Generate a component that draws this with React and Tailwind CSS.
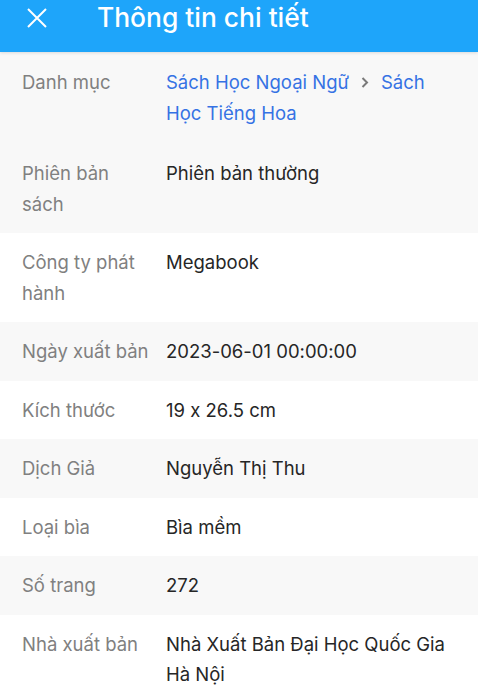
import React from "react";

const rows = [
  { label: "Phiên bản sách", value: "Phiên bản thường" },
  { label: "Công ty phát hành", value: "Megabook" },
  { label: "Ngày xuất bản", value: "2023-06-01 00:00:00" },
  { label: "Kích thước", value: "19 x 26.5 cm" },
  { label: "Dịch Giả", value: "Nguyễn Thị Thu" },
  { label: "Loại bìa", value: "Bìa mềm" },
  { label: "Số trang", value: "272" },
  { label: "Nhà xuất bản", value: "Nhà Xuất Bản Đại Học Quốc Gia Hà Nội" },
];

function Row({ label, children, gray, extra = "py-[14px]" }) {
  return (
    <div className={`flex gap-4 px-[22px] ${extra} ${gray ? "bg-[#f8f8f8]" : "bg-white"}`}>
      <div className="w-[128px] shrink-0 text-[#808080]">{label}</div>
      <div className="min-w-0 flex-1 text-[#262626]">{children}</div>
    </div>
  );
}

export default function App() {
  return (
    <div
      className="h-[694px] overflow-hidden bg-white text-[18.5px] leading-[30.5px] [font-feature-settings:'calt'_0]"
      style={{ fontFamily: "Inter, 'Noto Sans', sans-serif" }}
    >
      <header className="relative z-10 flex h-[52px] items-start gap-[49px] bg-[#1ea5fa] pl-[26px] pt-[1px] shadow-[0_1px_3px_rgba(0,0,0,0.12)]">
        <svg width="22" height="22" viewBox="0 0 22 22" className="mt-[6px]" fill="none" stroke="white" strokeWidth="2">
          <path d="M2 2 L20 20 M20 2 L2 20" />
        </svg>
        <h1 className="text-[26.4px] leading-[32px] font-medium text-white">Thông tin chi tiết</h1>
      </header>

      <div className="flex flex-col">
        <Row label="Danh mục" gray extra="pt-[15px] pb-[16px]">
          <span className="text-[#3572e4]">Sách Học Ngoại Ngữ</span>
          <svg width="8" height="11" viewBox="0 0 8 11" className="mx-[12px] inline-block align-[1px]" fill="none" stroke="#7a7a7a" strokeWidth="2">
            <path d="M1.5 1 L6 5.5 L1.5 10" />
          </svg>
          <span className="text-[#3572e4]">Sách Học Tiếng Hoa</span>
        </Row>
        {rows.map((r, i) => (
          <Row key={r.label} label={r.label} gray={i % 2 === 0}>
            {r.value}
          </Row>
        ))}
      </div>
    </div>
  );
}
